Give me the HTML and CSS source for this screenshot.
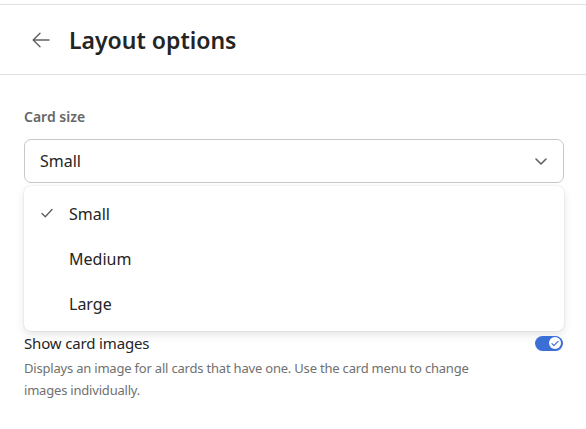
FILE: index.html
```html
<!DOCTYPE html>
<html lang="en">
<head>
<meta charset="utf-8">
<title>Layout options</title>
<link rel="stylesheet" href="styles.css">
</head>
<body>
<div class="page">
  <header class="header">
    <button class="back" aria-label="Back">
      <svg width="18" height="16" viewBox="0 0 18 16" fill="none" stroke="#616161" stroke-width="1.4" stroke-linecap="round" stroke-linejoin="round"><path d="M17 8H1.5M8 1.2L1.2 8L8 14.8"/></svg>
    </button>
    <h1 class="title">Layout options</h1>
  </header>
  <main class="content">
    <div class="label">Card size</div>
    <div class="select">
      <span class="select-value">Small</span>
      <svg class="chevron" width="12" height="7" viewBox="0 0 12 7" fill="none" stroke="#616161" stroke-width="1.6" stroke-linecap="round" stroke-linejoin="round"><path d="M1 1l5 5 5-5"/></svg>
    </div>
    <ul class="listbox">
      <li class="option selected">
        <svg class="check" width="12" height="10" viewBox="0 0 12 10" fill="none" stroke="#616161" stroke-width="1.4" stroke-linecap="round" stroke-linejoin="round"><path d="M1 5.5l3.3 3.3L11 1.5"/></svg>
        <span>Small</span>
      </li>
      <li class="option"><span>Medium</span></li>
      <li class="option"><span>Large</span></li>
    </ul>
    <div class="setting">
      <div class="setting-row">
        <span class="setting-title">Show card images</span>
        <span class="toggle">
          <span class="knob">
            <svg width="10" height="8" viewBox="0 0 10 8" fill="none" stroke="#3c6fd6" stroke-width="1.5" stroke-linecap="round" stroke-linejoin="round"><path d="M1.2 4.2l2.4 2.4L8.8 1.4"/></svg>
          </span>
        </span>
      </div>
      <p class="setting-desc">Displays an image for all cards that have one. Use the card menu to change images individually.</p>
    </div>
  </main>
</div>
</body>
</html>
```

FILE: styles.css
```css
* { box-sizing: border-box; }
html, body { margin: 0; padding: 0; background: #ffffff; }
body {
  font-family: "Noto Sans", "Open Sans", sans-serif;
  color: #242424;
}
.page {
  margin-top: 4px;
  border-top: 1px solid #e1e1e1;
}
.header {
  height: 70px;
  border-bottom: 1px solid #e1e1e1;
  display: flex;
  align-items: center;
  padding-left: 32px;
}
.back {
  border: 0;
  background: none;
  padding: 0;
  width: 18px;
  height: 16px;
  display: flex;
  margin-right: 19px;
}
.title {
  margin: 0;
  font-size: 23px;
  font-weight: 600;
  color: #242424;
  line-height: 30px;
}
.content {
  padding: 0 22px 0 24px;
}
.label {
  margin-top: 32px;
  font-size: 14px;
  font-weight: 600;
  color: #666666;
  line-height: 20px;
}
.select {
  margin-top: 12px;
  height: 44px;
  border: 1px solid #c8c8c8;
  border-radius: 7px;
  display: flex;
  align-items: center;
  justify-content: space-between;
  padding: 0 16px 0 15px;
}
.select-value {
  font-size: 16px;
  color: #242424;
}
.listbox {
  list-style: none;
  margin: 3px 0 0;
  padding: 5px 0 5px;
  height: 145px;
  border-radius: 7px;
  background: #fff;
  box-shadow: 0 0 2px rgba(0,0,0,0.14), 0 4px 10px rgba(0,0,0,0.10);
}
.option {
  height: 45px;
  display: flex;
  align-items: center;
  padding-left: 45px;
  position: relative;
  font-size: 16px;
  color: #242424;
}
.check {
  position: absolute;
  left: 17px;
  top: 17px;
}
.setting {
  margin-top: 2px;
}
.setting-row {
  display: flex;
  align-items: center;
  justify-content: space-between;
  height: 20px;
}
.setting-title {
  font-size: 15px;
  letter-spacing: -0.15px;
  color: #242424;
}
.toggle {
  width: 28px;
  height: 15px;
  border-radius: 8px;
  background: #3c6fd6;
  display: flex;
  align-items: center;
  justify-content: flex-end;
  padding-right: 2px;
  margin-right: 1px;
}
.knob {
  width: 12px;
  height: 12px;
  border-radius: 50%;
  background: #fff;
  display: flex;
  align-items: center;
  justify-content: center;
}
.knob svg { width: 8px; height: 7px; }
.setting-desc {
  margin: 4px 0 0;
  font-size: 13px;
  letter-spacing: -0.2px;
  line-height: 22px;
  color: #707070;
  max-width: 480px;
}
```
